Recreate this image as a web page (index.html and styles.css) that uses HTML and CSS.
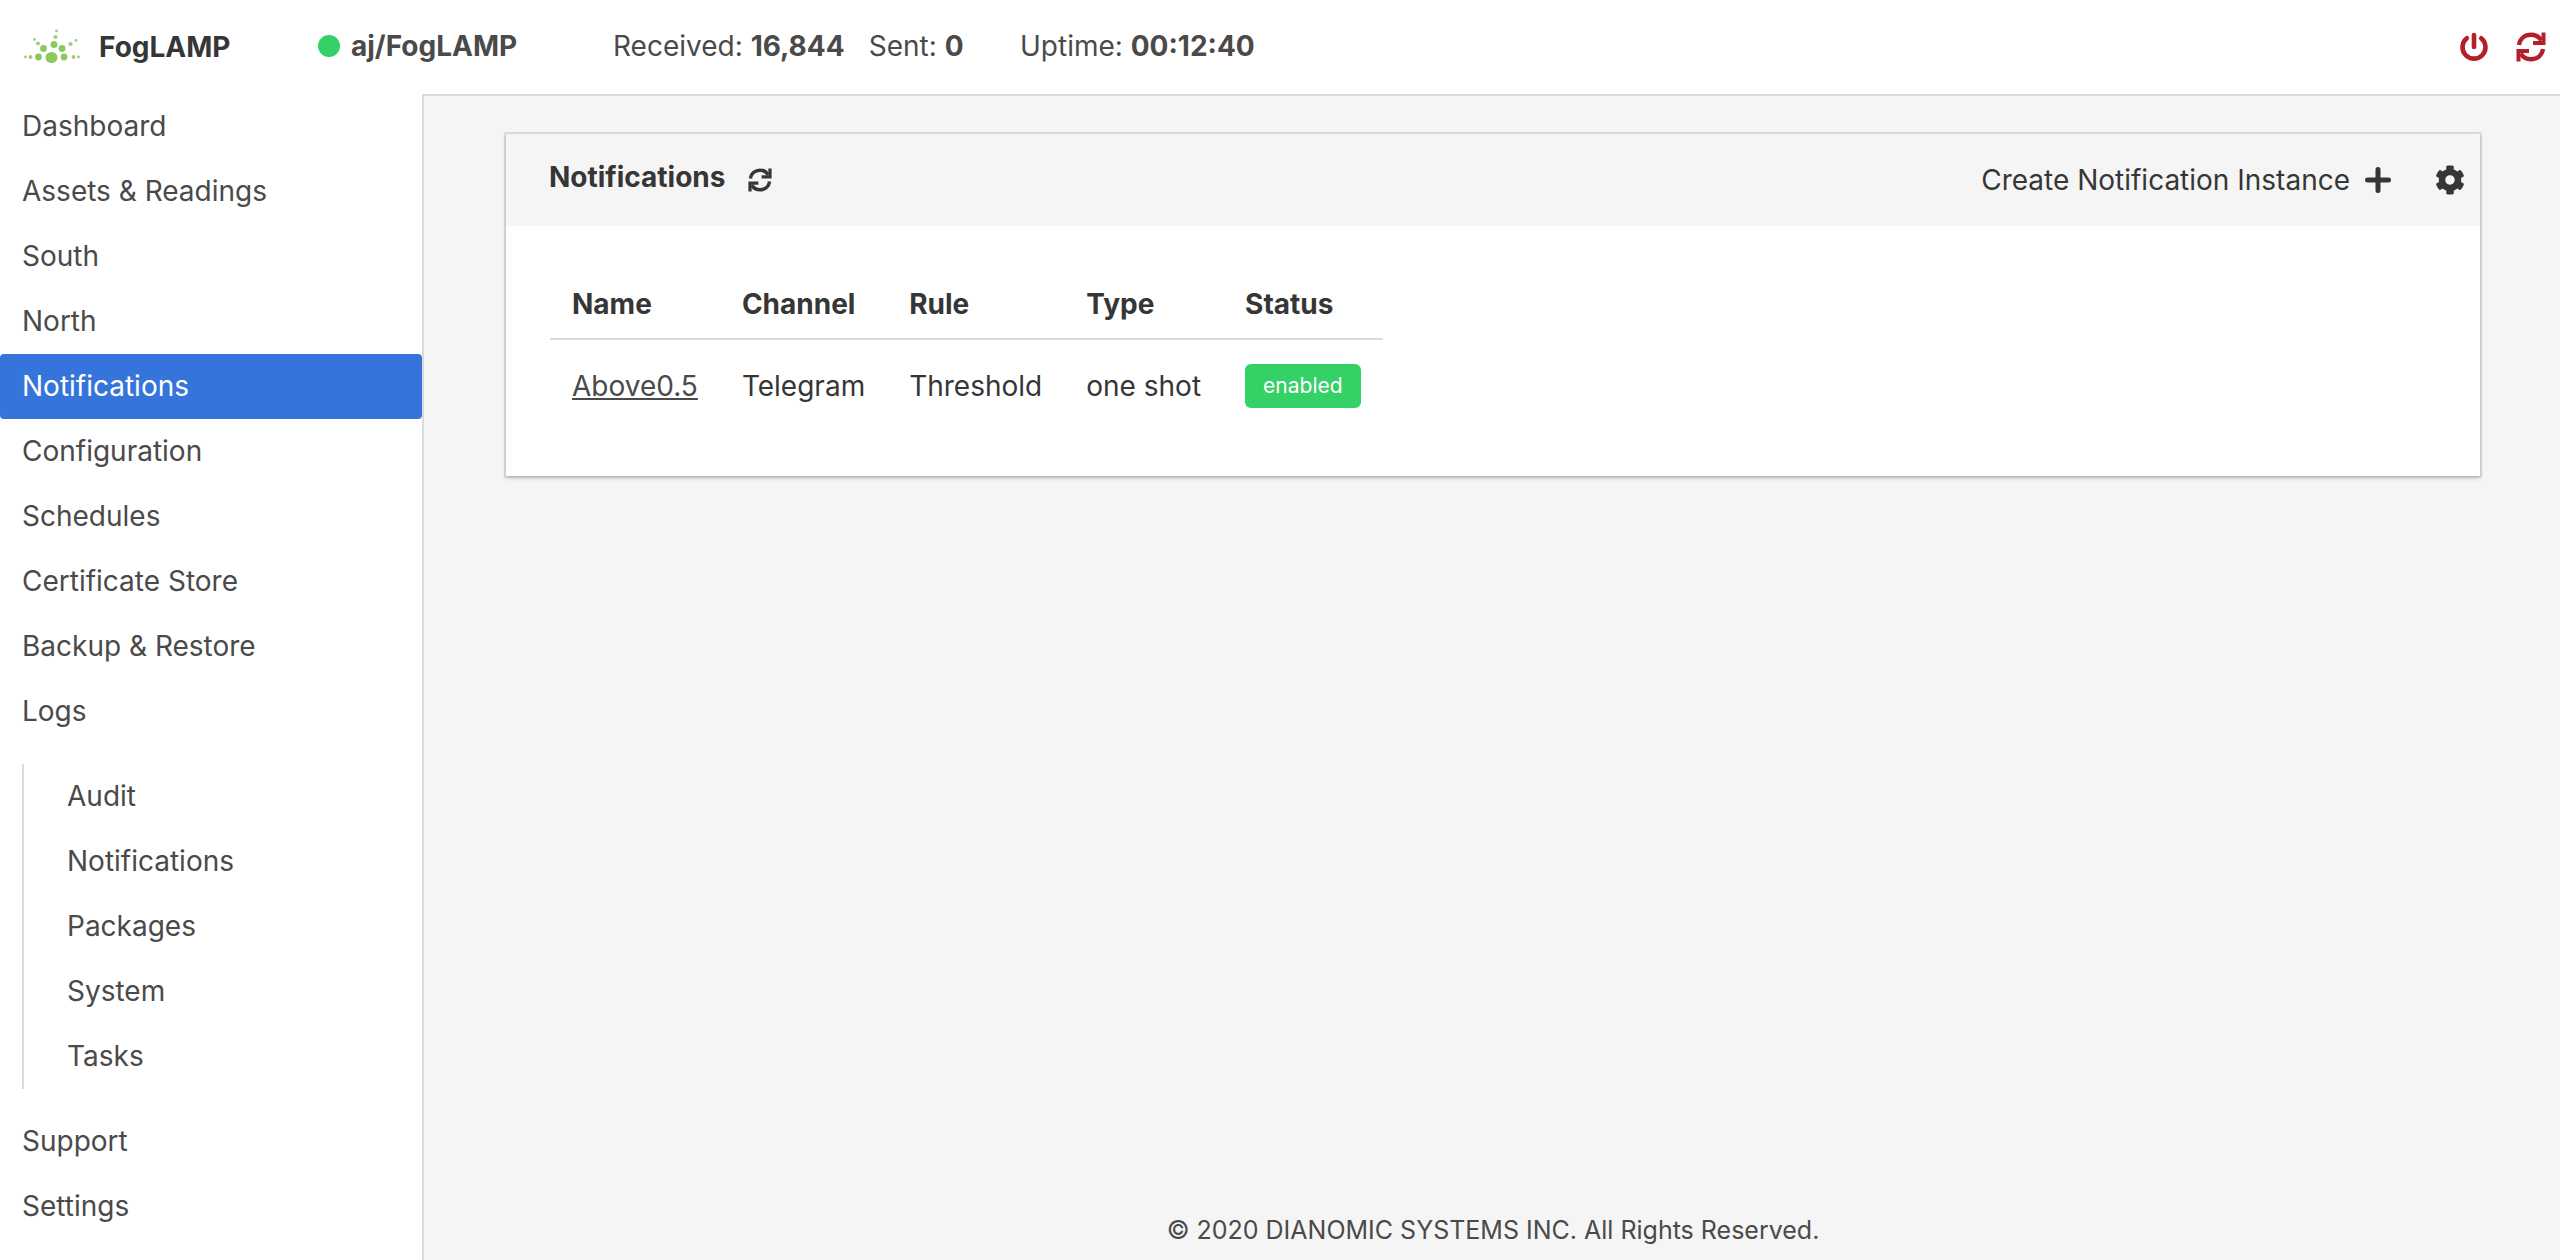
FILE: index.html
```html
<!DOCTYPE html>
<html lang="en">
<head>
<meta charset="utf-8">
<title>FogLAMP</title>
<link rel="stylesheet" href="styles.css">
</head>
<body>
<svg class="sprite" aria-hidden="true">
  <symbol id="sync" viewBox="0 0 30 30">
    <path d="M3 13C4 6.500 9 2.800 15 2.800c4.500 0 8 2 10.200 5.600M27 17c-1 6.500-6 10.200-12 10.200-4.500 0-8-2-10.200-5.600" fill="none" stroke="currentColor" stroke-width="4.400"/>
    <path d="M25.500 .5H29.500V13H17V9h8.500zM4.500 29.500H.5V17H13v4H4.500z" fill="currentColor"/>
  </symbol>
</svg>
<header class="topbar">
  <a class="brand" href="#">
    <svg class="logo" viewBox="0 0 56 36" aria-hidden="true">
      <g fill="#8cc860">
        <ellipse cx="27.500" cy="28.500" rx="6" ry="5.500"/>
        <circle cx="14.500" cy="28" r="3.400"/><circle cx="40" cy="28" r="3.400"/>
        <circle cx="19.500" cy="19.500" r="3.400"/><circle cx="38" cy="19.500" r="3.400"/>
        <circle cx="30" cy="15.500" r="3.500"/>
      </g>
      <g fill="#a2cd83">
        <circle cx="6.500" cy="28" r="2"/><circle cx="49.500" cy="28" r="2"/>
        <circle cx="14" cy="14.500" r="2.100"/><circle cx="46.500" cy="15" r="2.100"/>
        <circle cx="31.500" cy="8" r="2.100"/><circle cx="1.500" cy="28" r="1.400"/>
        <circle cx="54.500" cy="28" r="1.400"/><circle cx="10.500" cy="10.500" r="1.400"/>
        <circle cx="52" cy="11.500" r="1.400"/><circle cx="32.500" cy="2" r="1.400"/>
      </g>
    </svg>
    FogLAMP
  </a>
  <div class="service"><span class="dot"></span><strong>aj/FogLAMP</strong></div>
  <div class="stats">
    <span>Received: <strong>16,844</strong></span>
    <span>Sent: <strong>0</strong></span>
  </div>
  <div class="uptime">Uptime: <strong>00:12:40</strong></div>
  <div class="power">
    <button type="button" aria-label="Shut down">
      <svg class="icon-lg" viewBox="0 0 30 30" aria-hidden="true"><path d="M7.800 6.200a11.500 11.500 0 1 0 14.400 0" fill="none" stroke="currentColor" stroke-width="4.600" stroke-linecap="round"/><path d="M15 3v12" stroke="currentColor" stroke-width="4.600" stroke-linecap="round"/></svg>
    </button>
    <button type="button" aria-label="Restart"><svg class="icon-lg" aria-hidden="true"><use href="#sync"/></svg></button>
  </div>
</header>
<div class="layout">
  <nav class="sidebar" aria-label="Main">
    <ul class="menu">
      <li><a href="#">Dashboard</a></li>
      <li><a href="#">Assets &amp; Readings</a></li>
      <li><a href="#">South</a></li>
      <li><a href="#">North</a></li>
      <li><a class="active" href="#" aria-current="page">Notifications</a></li>
      <li><a href="#">Configuration</a></li>
      <li><a href="#">Schedules</a></li>
      <li><a href="#">Certificate Store</a></li>
      <li><a href="#">Backup &amp; Restore</a></li>
      <li><a href="#">Logs</a>
        <ul class="submenu">
          <li><a href="#">Audit</a></li>
          <li><a href="#">Notifications</a></li>
          <li><a href="#">Packages</a></li>
          <li><a href="#">System</a></li>
          <li><a href="#">Tasks</a></li>
        </ul>
      </li>
      <li><a href="#">Support</a></li>
      <li><a href="#">Settings</a></li>
    </ul>
  </nav>
  <div class="content">
    <main class="card">
      <div class="card-header">
        <h1>Notifications</h1>
        <button type="button" aria-label="Refresh"><svg class="icon-sm" aria-hidden="true"><use href="#sync"/></svg></button>
        <button class="create" type="button">Create Notification Instance
          <svg class="icon-md" viewBox="0 0 26 26" aria-hidden="true"><path d="M13 2.500v21M2.500 13h21" stroke="currentColor" stroke-width="5" stroke-linecap="round"/></svg>
        </button>
        <button type="button" aria-label="Notification settings">
          <svg class="icon-gear" viewBox="0 0 512 512" aria-hidden="true"><path fill="currentColor" d="M487.400 315.700l-42.600-24.600c4.300-23.200 4.300-47 0-70.200l42.600-24.600c4.900-2.800 7.100-8.600 5.500-14-11.100-35.600-30-67.800-54.700-94.600-3.800-4.100-10-5.100-14.800-2.300L380.800 110c-17.900-15.400-38.500-27.300-60.800-35.100V25.800c0-5.600-3.900-10.500-9.400-11.700-36.700-8.200-74.300-7.800-109.200 0-5.500 1.200-9.400 6.100-9.400 11.700V75c-22.200 7.900-42.800 19.800-60.800 35.100L88.700 85.500c-4.900-2.800-11-1.900-14.800 2.300-24.700 26.700-43.600 58.900-54.700 94.600-1.700 5.400.6 11.200 5.500 14L67.300 221c-4.300 23.200-4.300 47 0 70.200l-42.600 24.600c-4.900 2.800-7.100 8.600-5.500 14 11.100 35.600 30 67.800 54.700 94.600 3.800 4.100 10 5.100 14.800 2.300l42.600-24.600c17.900 15.400 38.500 27.300 60.800 35.100v49.200c0 5.600 3.900 10.500 9.400 11.700 36.700 8.200 74.300 7.800 109.200 0 5.500-1.200 9.400-6.100 9.400-11.700v-49.200c22.200-7.900 42.800-19.800 60.800-35.100l42.600 24.600c4.900 2.800 11 1.900 14.800-2.300 24.700-26.700 43.600-58.900 54.700-94.600 1.500-5.500-.7-11.300-5.600-14.100zM256 336c-44.100 0-80-35.900-80-80s35.900-80 80-80 80 35.900 80 80-35.900 80-80 80z"/></svg>
        </button>
      </div>
      <div class="card-body">
        <table>
          <thead>
            <tr><th scope="col">Name</th><th scope="col">Channel</th><th scope="col">Rule</th><th scope="col">Type</th><th scope="col">Status</th></tr>
          </thead>
          <tbody>
            <tr><td><a href="#">Above0.5</a></td><td>Telegram</td><td>Threshold</td><td>one shot</td><td><span class="tag">enabled</span></td></tr>
          </tbody>
        </table>
      </div>
    </main>
    <footer>© 2020 DIANOMIC SYSTEMS INC. All Rights Reserved.</footer>
  </div>
</div>
</body>
</html>
```

FILE: styles.css
```css
* { box-sizing: border-box; }

body {
  margin: 0;
  min-height: 100vh;
  display: flex;
  flex-direction: column;
  font-family: Inter, "Liberation Sans", sans-serif;
  font-size: 28px;
  line-height: 42px;
  color: #4a4a4a;
  background: #fff;
}

a { color: inherit; text-decoration: none; }
ul { margin: 0; padding: 0; list-style: none; }
strong { font-weight: 700; }
svg { display: block; }

button {
  display: flex;
  align-items: center;
  padding: 0;
  border: 0;
  background: none;
  font: inherit;
  color: inherit;
  cursor: pointer;
}

.sprite { position: absolute; width: 0; height: 0; }
.icon-lg { width: 30px; height: 30px; }
.icon-md { width: 26px; height: 26px; }
.icon-sm { width: 24px; height: 24px; }
.icon-gear { width: 30px; height: 30px; }

/* Top bar */
.topbar {
  display: flex;
  align-items: center;
  height: 94px;
  padding: 0 14px 2px 24px;
}
.brand {
  display: flex;
  align-items: center;
  gap: 19px;
  width: 294px;
  padding-top: 2px;
  font-weight: 700;
  color: #363636;
}
.logo { width: 56px; height: 36px; }
.service { display: flex; align-items: center; gap: 11px; width: 295px; }
.dot { width: 22px; height: 22px; border-radius: 50%; background: #33d166; }
.stats { display: flex; gap: 24px; width: 407px; }
.power { display: flex; gap: 27px; margin-left: auto; padding-top: 2px; color: #b3202a; }

/* Sidebar */
.layout { flex: 1; display: flex; }
.sidebar { width: 422px; }
.menu a { display: block; padding: 0 22px; line-height: 65px; }
.menu a.active { border-radius: 4px; background: #3575db; color: #fff; }
.submenu {
  margin: 20px 22px;
  padding-left: 21px;
  border-left: 2px solid #dbdbdb;
}

/* Content */
.content {
  flex: 1;
  display: flex;
  flex-direction: column;
  padding: 38px 80px 0 82px;
  border: solid #dbdbdb;
  border-width: 2px 0 0 2px;
  background: #f5f5f5;
}
.card {
  background: #fff;
  box-shadow: 0 2px 4px rgba(10, 10, 10, .2), 0 0 0 2px rgba(10, 10, 10, .1);
}
.card-header {
  display: flex;
  align-items: center;
  height: 92px;
  padding: 0 15px 0 43px;
  color: #363636;
  background: #f5f5f5;
}
h1 { margin: 0 23px 6px 0; font-size: 28px; line-height: 42px; font-weight: 700; }
.create { gap: 15px; margin: 0 44px 0 auto; }
.card-body { padding: 44px; }

table { border-collapse: collapse; color: #363636; }
th, td { text-align: left; }
th { padding: 13px 22px; border-bottom: 2px solid #dbdbdb; font-weight: 700; }
td { padding: 24px 22px; }
td a { color: #4a4a4a; text-decoration: underline; }
.tag {
  display: flex;
  align-items: center;
  height: 44px;
  padding: 0 18px;
  border-radius: 6px;
  background: #33d166;
  color: #fff;
  font-size: 21px;
}

footer { margin-top: auto; padding-bottom: 9px; font-size: 25px; text-align: center; }
```
